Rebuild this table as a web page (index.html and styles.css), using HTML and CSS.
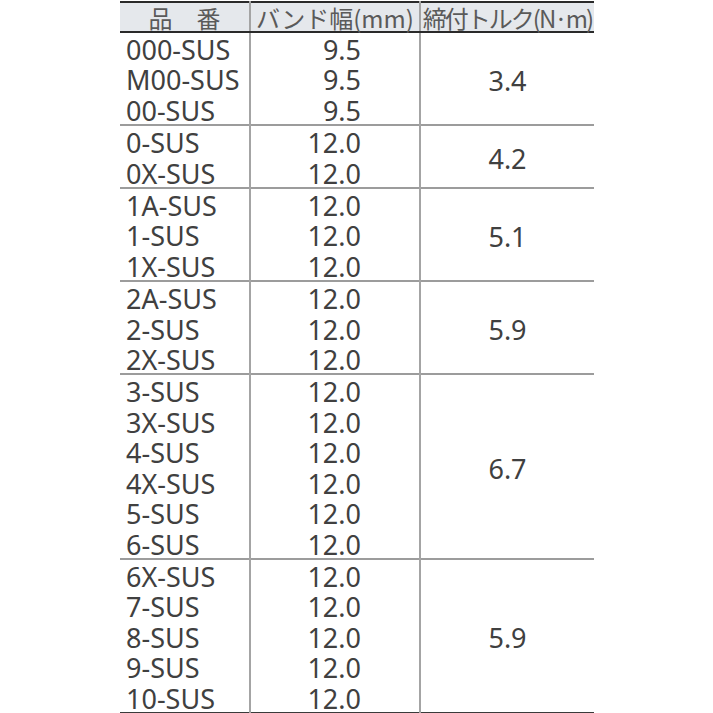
FILE: index.html
```html
<!DOCTYPE html>
<html lang="ja">
<head>
<meta charset="utf-8">
<link rel="stylesheet" href="styles.css">
</head>
<body>
<table class="spec">
  <thead>
    <tr>
      <th class="c1">品　番</th>
      <th class="c2">バンド幅(mm)</th>
      <th class="c3"><span class="tight">締付トルク(N·m)</span></th>
    </tr>
  </thead>
  <tbody>
    <tr><td class="c1">000-SUS</td><td class="c2">9.5</td><td class="c3" rowspan="3">3.4</td></tr>
    <tr><td class="c1">M00-SUS</td><td class="c2">9.5</td></tr>
    <tr><td class="c1">00-SUS</td><td class="c2">9.5</td></tr>
  </tbody>
  <tbody>
    <tr><td class="c1">0-SUS</td><td class="c2">12.0</td><td class="c3" rowspan="2">4.2</td></tr>
    <tr><td class="c1">0X-SUS</td><td class="c2">12.0</td></tr>
  </tbody>
  <tbody>
    <tr><td class="c1">1A-SUS</td><td class="c2">12.0</td><td class="c3" rowspan="3">5.1</td></tr>
    <tr><td class="c1">1-SUS</td><td class="c2">12.0</td></tr>
    <tr><td class="c1">1X-SUS</td><td class="c2">12.0</td></tr>
  </tbody>
  <tbody>
    <tr><td class="c1">2A-SUS</td><td class="c2">12.0</td><td class="c3" rowspan="3">5.9</td></tr>
    <tr><td class="c1">2-SUS</td><td class="c2">12.0</td></tr>
    <tr><td class="c1">2X-SUS</td><td class="c2">12.0</td></tr>
  </tbody>
  <tbody>
    <tr><td class="c1">3-SUS</td><td class="c2">12.0</td><td class="c3" rowspan="6">6.7</td></tr>
    <tr><td class="c1">3X-SUS</td><td class="c2">12.0</td></tr>
    <tr><td class="c1">4-SUS</td><td class="c2">12.0</td></tr>
    <tr><td class="c1">4X-SUS</td><td class="c2">12.0</td></tr>
    <tr><td class="c1">5-SUS</td><td class="c2">12.0</td></tr>
    <tr><td class="c1">6-SUS</td><td class="c2">12.0</td></tr>
  </tbody>
  <tbody class="last">
    <tr><td class="c1">6X-SUS</td><td class="c2">12.0</td><td class="c3" rowspan="5">5.9</td></tr>
    <tr><td class="c1">7-SUS</td><td class="c2">12.0</td></tr>
    <tr><td class="c1">8-SUS</td><td class="c2">12.0</td></tr>
    <tr><td class="c1">9-SUS</td><td class="c2">12.0</td></tr>
    <tr><td class="c1">10-SUS</td><td class="c2">12.0</td></tr>
  </tbody>
</table>
</body>
</html>
```

FILE: styles.css
```css
html, body {
  margin: 0;
  padding: 0;
  background: #ffffff;
}

body {
  padding-top: 1px;
}

.spec {
  margin-left: 120px;
  width: 474px;
  border-collapse: collapse;
  table-layout: fixed;
  font-family: "Noto Sans", "Noto Sans CJK JP", sans-serif;
  color: #404040;
}

.spec th {
  height: 30px;
  box-sizing: border-box;
  background: #e5e8ec;
  border-top: 2px solid #2a2a2a;
  border-bottom: 2px solid #2a2a2a;
  font-family: "Noto Sans CJK JP", sans-serif;
  font-weight: normal;
  font-size: 24px;
  line-height: 27px;
  color: #5a5a5a;
  padding: 1px 0 0 0;
  text-align: center;
  white-space: nowrap;
}

.spec th.c1 { width: 130px; }
.spec th.c2 { width: 170px; }

.tight {
  letter-spacing: -2px;
}

.spec tbody {
  border-bottom: 2px solid #9c9c9c;
}

.spec tbody.last {
  border-bottom: 2px solid #3a3a3a;
}

.spec td {
  height: 30.4px;
  box-sizing: border-box;
  font-size: 27px;
  line-height: 27.4px;
  padding: 3px 0 0 0;
  white-space: nowrap;
}

.spec .c1 {
  border-right: 2px solid #a4a4a4;
}

.spec .c2 {
  border-right: 2px solid #a4a4a4;
}

.spec td.c1 {
  text-align: left;
  padding-left: 6px;
}

.spec td.c2 {
  text-align: right;
  padding-right: 58px;
}

.spec td.c3 {
  text-align: center;
  vertical-align: middle;
  padding: 4px 0 0 0;
}
```
